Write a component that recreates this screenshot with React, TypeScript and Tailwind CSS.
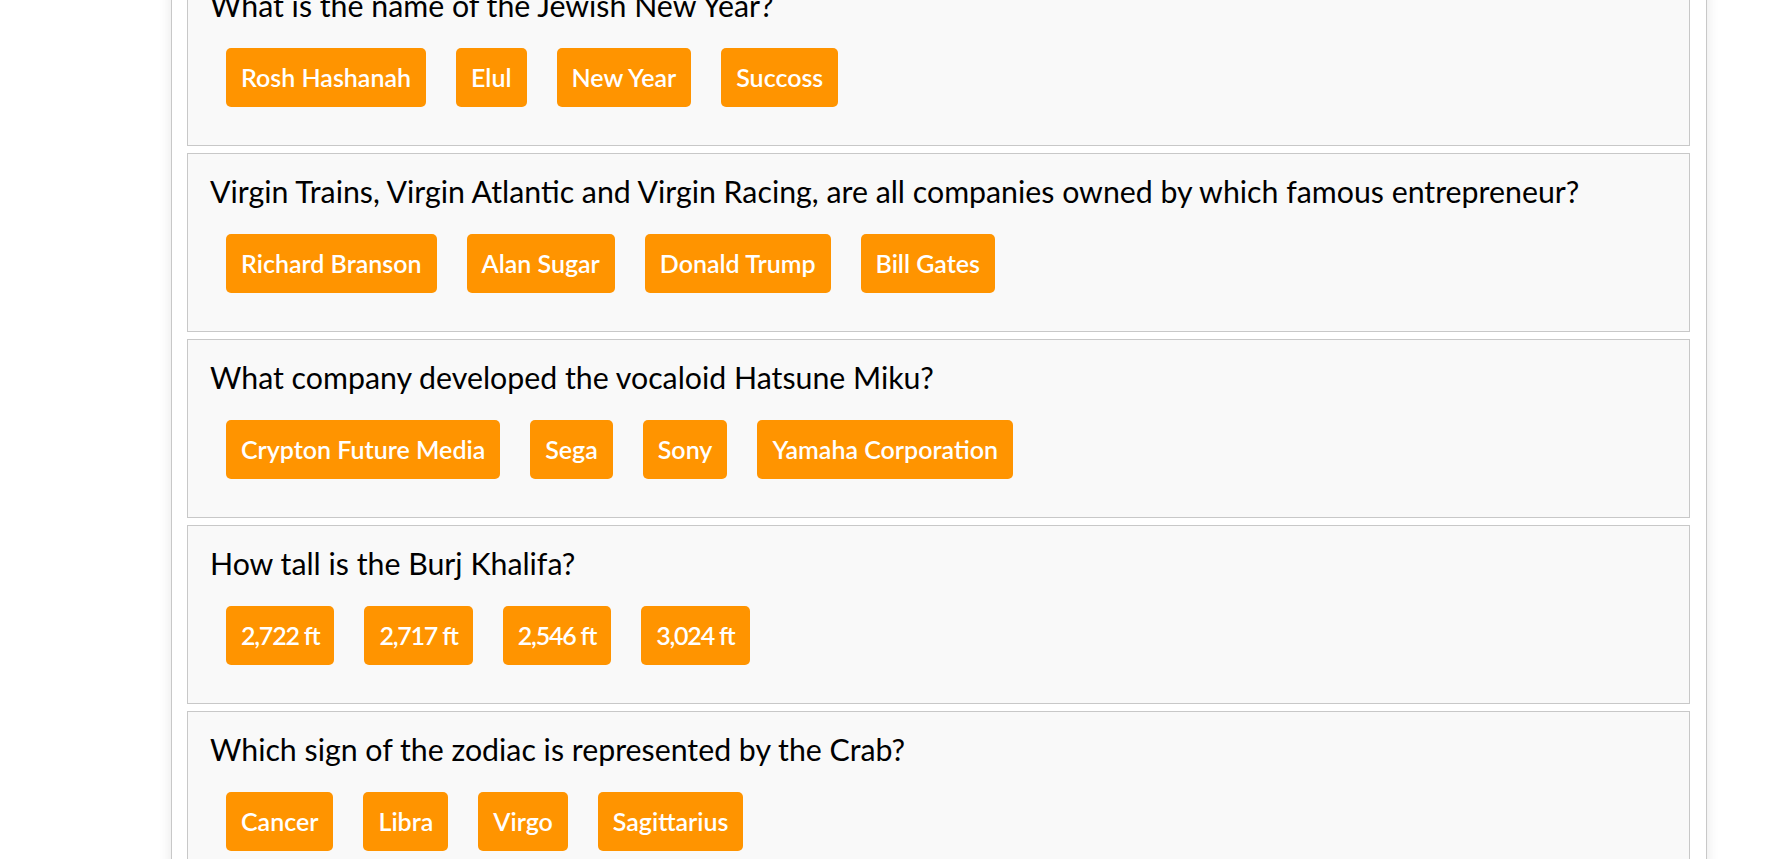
type Question = {
  id: number
  text: string
  answers: string[]
  numeric?: boolean
}

const questions: Question[] = [
  { id: 1, text: "What is the name of the Jewish New Year?", answers: ["Rosh Hashanah", "Elul", "New Year", "Succoss"] },
  {
    id: 2,
    text: "Virgin Trains, Virgin Atlantic and Virgin Racing, are all companies owned by which famous entrepreneur?",
    answers: ["Richard Branson", "Alan Sugar", "Donald Trump", "Bill Gates"],
  },
  {
    id: 3,
    text: "What company developed the vocaloid Hatsune Miku?",
    answers: ["Crypton Future Media", "Sega", "Sony", "Yamaha Corporation"],
  },
  {
    id: 4,
    text: "How tall is the Burj Khalifa?",
    answers: ["2,722 ft", "2,717 ft", "2,546 ft", "3,024 ft"],
    numeric: true,
  },
  {
    id: 5,
    text: "Which sign of the zodiac is represented by the Crab?",
    answers: ["Cancer", "Libra", "Virgo", "Sagittarius"],
  },
]

function QuestionCard({ question }: { question: Question }) {
  return (
    <div className="mb-[7px] h-[179px] border border-[#c8c8c8] bg-[#f9f9f9] pt-[19px] pr-[22px] pl-[22px]">
      <h3 className="text-[30.3px] leading-[36px] font-normal text-black">{question.text}</h3>
      <div className="mt-[25px] flex gap-[30px] pl-4">
        {question.answers.map((answer) => (
          <button
            key={answer}
            className={
              "rounded-[5px] bg-[#ff9400] p-[15px] text-[25px] leading-[29px] font-semibold text-white " +
              (question.numeric ? "tracking-[-1.2px]" : "")
            }
          >
            {answer}
          </button>
        ))}
      </div>
    </div>
  )
}

export default function App() {
  return (
    <div className="h-screen overflow-hidden bg-white font-['Lato',sans-serif]">
      <div className="-mt-[49px] ml-[171px] w-[1536px] border border-[#c8c8c8] bg-white pt-[15px] pr-[16px] pl-[15px] shadow-[0_0_12px_rgba(0,0,0,0.1)]">
        {questions.map((q) => (
          <QuestionCard key={q.id} question={q} />
        ))}
      </div>
    </div>
  )
}
